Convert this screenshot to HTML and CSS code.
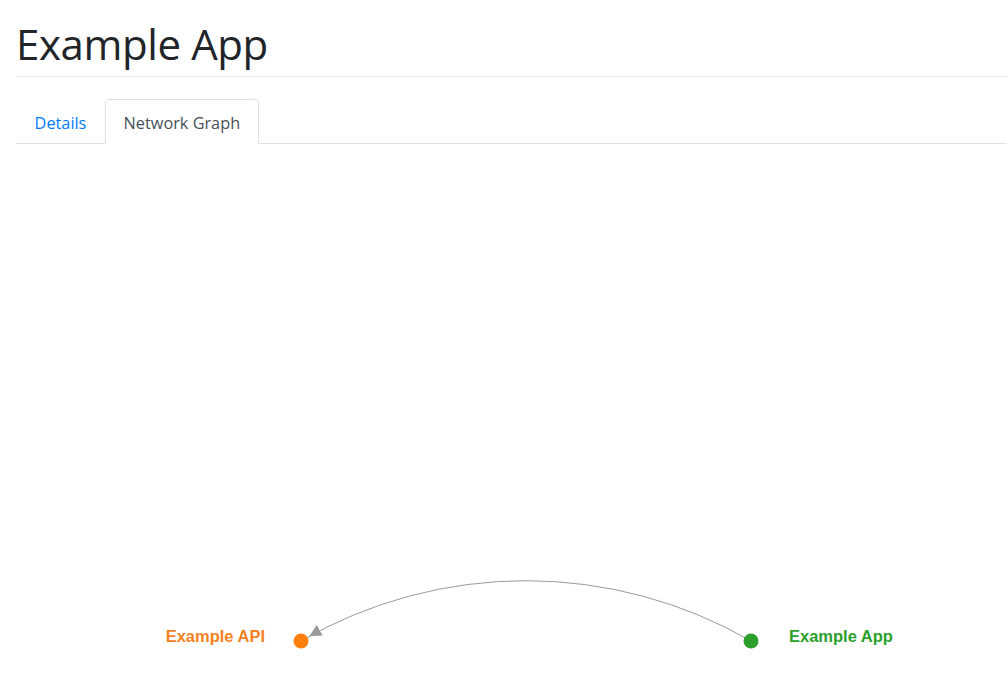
FILE: index.html
```html
<!DOCTYPE html>
<html lang="en">
<head>
  <meta charset="UTF-8">
  <title>Example App</title>
  <link rel="stylesheet" href="styles.css">
</head>
<body>
  <div class="page">
    <div class="page-header">
      <h1 class="page-title">Example App</h1>
    </div>
    <ul class="nav-tabs">
      <li class="nav-item"><a class="nav-link" href="#details">Details</a></li>
      <li class="nav-item"><a class="nav-link active" href="#graph">Network Graph</a></li>
    </ul>
    <div class="graph-pane">
      <svg class="graph" width="991" height="549" viewBox="16 144 991 549">
        <defs>
          <marker id="arrow" viewBox="0 -5 10 10" refX="18" refY="0"
                  markerWidth="12" markerHeight="12" markerUnits="userSpaceOnUse" orient="auto">
            <path d="M0,-5L10,0L0,5" fill="#999"></path>
          </marker>
        </defs>
        <!-- link: app -> api -->
        <path class="link" d="M751,641A450,450 0 0,0 301,641" marker-end="url(#arrow)"></path>
        <g class="node api">
          <circle cx="301" cy="641" r="7.5"></circle>
          <text x="265" y="642" text-anchor="end">Example API</text>
        </g>
        <g class="node app">
          <circle cx="751" cy="641" r="7.5"></circle>
          <text x="789" y="642">Example App</text>
        </g>
      </svg>
    </div>
  </div>
</body>
</html>
```

FILE: styles.css
```css
body {
  margin: 0;
  background: #fff;
  color: #212529;
  font-family: "Open Sans", "Noto Sans", sans-serif;
  font-size: 17.6px;
  line-height: 1.5;
}
.page {
  padding-left: 16px;
}
.page-header {
  padding-top: 19px;
  padding-bottom: 7px;
  border-bottom: 1px solid #e9ecef;
}
.page-title {
  margin: 0;
  font-size: 42px;
  font-weight: 400;
  line-height: 1.2;
  letter-spacing: -0.4px;
}
.nav-tabs {
  display: flex;
  list-style: none;
  margin: 22px 0 0 0;
  padding: 0;
  border-bottom: 1px solid #dee2e6;
}
.nav-item {
  margin-bottom: -1px;
}
.nav-link {
  display: block;
  padding: 9.5px 17.6px 6.5px;
  height: 27px;
  line-height: 27px;
  font-size: 16.3px;
  color: #007bff;
  text-decoration: none;
  border: 1px solid transparent;
  border-top-left-radius: 4.4px;
  border-top-right-radius: 4.4px;
}
.nav-link.active {
  color: #495057;
  background: #fff;
  border-color: #dee2e6 #dee2e6 #fff;
}
.graph-pane {
  height: 549px;
}
.graph {
  display: block;
}
.link {
  fill: none;
  stroke: #999;
  stroke-width: 1;
}
.node text {
  font-family: "Liberation Sans", Arial, sans-serif;
  font-weight: bold;
  font-size: 16.5px;
}
.node.api circle { fill: #ff7f0e; }
.node.api text { fill: #f5821f; }
.node.app circle { fill: #2ca02c; }
.node.app text { fill: #2ca02c; }
```
